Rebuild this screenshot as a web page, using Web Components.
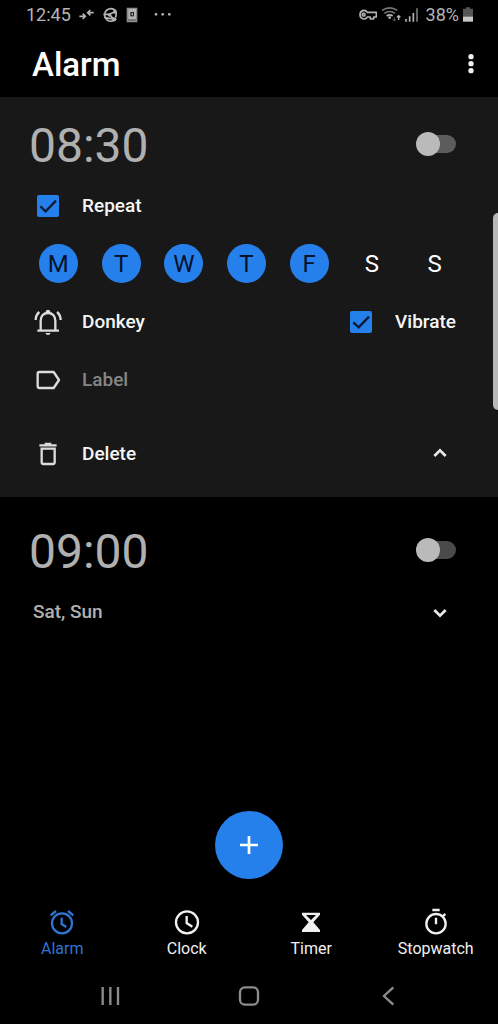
<!DOCTYPE html>
<html lang="en">
<head>
<meta charset="utf-8">
<meta name="viewport" content="width=device-width, initial-scale=1">
<title>Alarm</title>
<style>
  html { background: #000; }
  body { margin: 0; background: #000; color: #f5f5f5; font-family: Roboto, "Noto Sans", sans-serif; }
</style>
</head>
<body>
<alarm-app></alarm-app>
<script>
const define = (name, css, html, setup) => {
  const template = document.createElement('template');
  template.innerHTML = `<style>
    *, *::before, *::after { box-sizing: border-box; }
    svg { display: block; flex: none; }
    button { appearance: none; display: block; border: 0; margin: 0; padding: 0; background: none; color: inherit; font: inherit; cursor: pointer; }
    ${css}</style>${html}`;
  customElements.define(name, class extends HTMLElement {
    constructor() {
      super();
      this.attachShadow({ mode: 'open' }).append(template.content.cloneNode(true));
    }
    connectedCallback() { if (setup) setup(this, this.shadowRoot); }
  });
};

/* Status bar: clock and notifications left, radios and battery right */
define('status-bar', `
  :host { display: flex; align-items: center; height: 30px; padding: 0 25px 0 26px; color: #b4b4b4; font-size: 18px; line-height: 24px; }
  svg { fill: none; stroke: currentColor; }
  .left { display: flex; align-items: center; gap: 8px; flex: 1; }
  .right { display: flex; align-items: center; gap: 4px; }
  .right span { margin-left: 3px; }
  .more { margin-left: 8px; }
`, `
  <div class="left">
    <span>12:45</span>
    <svg width="15" height="18" viewBox="241 18 45 54" stroke-width="5"><path d="M242 49h17M252 41l8 8-8 8M285 38h-17M275 30l-8 8 8 8"/></svg>
    <svg width="16" height="18" viewBox="308 18 48 54" stroke-width="5"><path d="M348 31a19 19 0 1 0 2 25M312 43h18l13 14M330 43l17-8M314 52c8 4 17 2 29 5"/><g fill="currentColor" stroke="none"><circle cx="331" cy="45" r="5"/><circle cx="347" cy="35" r="6"/><circle cx="345" cy="58" r="6"/></g><path d="M351 38l-2 15"/></svg>
    <svg width="12" height="18" viewBox="384 18 36 54" stroke-width="4"><path d="M388 25h28v40h-28z" fill="#777" stroke="#8c8c8c"/><path d="M393 29h19v26h-19z" fill="currentColor"/><path d="M397 36h11v13h-11z" fill="#222" stroke="none"/><path d="M399 42l6-4v9z" fill="currentColor" stroke="none"/></svg>
    <svg class="more" width="18" height="18" viewBox="464 18 54 54"><g fill="currentColor" stroke="none"><circle cx="470" cy="43" r="4"/><circle cx="490" cy="43" r="4"/><circle cx="510" cy="43" r="4"/></g></svg>
  </div>
  <div class="right">
    <svg width="18" height="18" viewBox="57 18 54 54" stroke-width="5"><path d="M82 37c-7-11-22-5-22 7s15 18 22 7h9v6h10v-6h8V37z" stroke-linejoin="round"/><circle cx="71" cy="44" r="4"/></svg>
    <svg width="20" height="18" viewBox="127 18 60 54" stroke-width="5"><path d="M130 31q23-15 46 0M137 40q16-11 32 0" stroke="#777"/><path d="M144 48q9-7 18 0"/><circle cx="153" cy="53" r="4" fill="currentColor" stroke="none"/><path d="M167 52v10M162 58l5 5 5-5" stroke="#666" stroke-width="3"/><path d="M180 60V47M175 52l5-5 5 5" stroke-width="4"/></svg>
    <svg width="14" height="18" viewBox="197 18 42 54" stroke-width="5"><path d="M200 65v-8M211 65V49M222 65V39"/><path d="M233 65V25" stroke="#777"/></svg>
    <span>38%</span>
    <svg width="10" height="18" viewBox="369 18 30 54"><g stroke="none"><path d="M378 22h12v4h9v25h-30V26h9z" fill="#555"/><path d="M369 50h30v15h-30z" fill="#c8c8c8"/></g></svg>
  </div>
`);

define('app-header', `
  :host { display: flex; align-items: center; justify-content: space-between; height: 67px; padding: 0 11px 0 32px; }
  h1 { margin: 0; padding-top: 3px; font-size: 33px; line-height: 40px; font-weight: 500; color: #fff; }
  svg { fill: #f0f0f0; }
`, `
  <h1><slot></slot></h1>
  <button aria-label="More options"><svg width="32" height="32" viewBox="0 0 96 96"><circle cx="48" cy="26" r="8"/><circle cx="48" cy="47" r="8"/><circle cx="48" cy="68" r="8"/></svg></button>
`);

define('toggle-switch', `
  :host { display: block; }
  .track { display: grid; align-items: center; width: 40px; height: 24px; }
  .track::before { content: ""; grid-area: 1 / 1; height: 18px; margin-left: 4px; border-radius: 9px; background: var(--track, #5c5c5c); }
  input { appearance: none; grid-area: 1 / 1; display: flex; width: 40px; height: 24px; margin: 0; cursor: pointer; }
  input::before { content: ""; width: 24px; height: 24px; border-radius: 50%; background: #bababa; }
  input:checked { justify-content: flex-end; }
  input:checked::before { background: #2680eb; }
`, `<div class="track"><input type="checkbox" role="switch"></div>`,
(host, root) => root.querySelector('input').setAttribute('aria-label', host.getAttribute('label')));

define('check-option', `
  :host { display: block; }
  label { display: flex; align-items: center; gap: 18px; cursor: pointer; }
  .box { display: grid; place-items: center; width: 32px; height: 32px; }
  input { appearance: none; grid-area: 1 / 1; width: 22px; height: 22px; margin: 0; border: 2px solid #bbb; border-radius: 2px; }
  input:checked { background: #2680eb; border-color: #2680eb; }
  svg { grid-area: 1 / 1; pointer-events: none; fill: none; stroke: #0b1b38; stroke-width: 7; visibility: hidden; }
  input:checked + svg { visibility: visible; }
`, `
  <label><span class="box"><input type="checkbox" checked><svg width="22" height="22" viewBox="0 0 66 66"><path d="M10 34l16 15L57 17"/></svg></span><slot></slot></label>
`);

define('icon-action', `
  :host { display: block; }
  button { display: flex; align-items: center; gap: 18px; }
  ::slotted(svg) { display: block; fill: none; stroke: #dcdcdc; }
`, `<button><slot name="icon"></slot><slot></slot></button>`);

define('day-picker', `
  :host { display: grid; grid-template-columns: repeat(7, 1fr); place-items: center; box-sizing: border-box; height: 58px; padding: 0 32px 2px 27px; font-weight: 400; }
  button { display: grid; place-items: center; width: 39px; height: 39px; border-radius: 50%; font-size: 24px; line-height: 40px; color: #fff; }
  button[aria-pressed="true"] { background: #2680eb; color: #06122b; }
`, `
  <button aria-label="Monday" aria-pressed="true">M</button>
  <button aria-label="Tuesday" aria-pressed="true">T</button>
  <button aria-label="Wednesday" aria-pressed="true">W</button>
  <button aria-label="Thursday" aria-pressed="true">T</button>
  <button aria-label="Friday" aria-pressed="true">F</button>
  <button aria-label="Saturday" aria-pressed="false">S</button>
  <button aria-label="Sunday" aria-pressed="false">S</button>
`, (host, root) => root.querySelectorAll('button').forEach(b => b.onclick = () =>
  b.setAttribute('aria-pressed', b.getAttribute('aria-pressed') !== 'true')));

/* One alarm: time and switch on top, slotted detail rows below */
define('alarm-card', `
  :host { display: block; padding: 22px 0 14px; font-size: 19px; line-height: 24px; font-weight: 500; --track: #4a4a4a; }
  :host([open]) { padding-top: 16px; background: #181818; --track: #5c5c5c; }
  .top { display: flex; align-items: center; justify-content: space-between; height: 64px; padding: 0 42px 2px 29px; }
  .time { padding-top: 4px; font-size: 48px; line-height: 56px; font-weight: 400; color: #b0b0b0; }
`, `
  <div class="top"><button class="time"><slot name="time"></slot></button><toggle-switch label="Alarm on"></toggle-switch></div>
  <slot></slot>
`);

define('card-row', `
  :host { display: flex; align-items: center; justify-content: space-between; height: 58px; padding: 0 42px 0 32px; }
`, `<slot></slot>`);

define('expand-button', `
  :host { display: block; }
  svg { fill: none; stroke: #e8e8e8; stroke-width: 8; }
  :host([down]) svg { transform: rotate(180deg); }
`, `<button aria-label="Show or hide details"><svg width="32" height="32" viewBox="0 0 96 96"><path d="M31 54l17-17 17 17"/></svg></button>`);

define('add-button', `
  :host { display: block; }
  button { display: grid; place-items: center; width: 68px; height: 68px; border-radius: 50%; background: #2680eb; }
  svg { fill: none; stroke: #fff; stroke-width: 8; }
`, `<button aria-label="Add alarm"><svg width="18" height="18" viewBox="0 0 54 54"><path d="M27 0v54M0 27h54"/></svg></button>`);

define('tab-link', `
  :host { display: block; flex: 1 1 0; min-width: 0; }
  a { display: flex; flex-direction: column; align-items: center; gap: 3px; padding: 12px 0 9px; color: #f0f0f0; font-size: 16px; line-height: 20px; text-decoration: none; }
  :host([current]) a { color: #2e74d0; }
  ::slotted(svg) { display: block; fill: none; stroke: currentColor; }
`, `<a><slot name="icon"></slot><slot></slot></a>`,
(host, root) => {
  const a = root.querySelector('a');
  a.href = host.getAttribute('to');
  if (host.hasAttribute('current')) a.setAttribute('aria-current', 'page');
});

define('tab-bar', `
  :host { display: block; }
  nav { display: flex; }
`, `<nav aria-label="Sections"><slot></slot></nav>`);

define('system-nav', `
  :host { display: grid; grid-template-columns: repeat(3, 1fr); place-items: center; height: 56px; padding: 0 40px; }
  svg { fill: none; stroke: #8c8c8c; stroke-width: 7; }
`, `
  <button aria-label="Recent apps"><svg width="24" height="24" viewBox="0 0 72 72"><path d="M14 9v54M37 9v54M60 9v54"/></svg></button>
  <button aria-label="Home"><svg width="24" height="24" viewBox="0 0 72 72"><rect x="9" y="10" width="54" height="52" rx="15"/></svg></button>
  <button aria-label="Back"><svg width="24" height="24" viewBox="0 0 72 72"><path d="M52 10L24 36l28 26"/></svg></button>
`);

define('alarm-app', `
  :host { display: flex; flex-direction: column; min-height: 100vh; }
  main { position: relative; flex: 1; display: flex; flex-direction: column; }
  .scroll { position: absolute; right: 0; top: 116px; width: 5px; height: 197px; border-radius: 5px 0 0 5px; background: #b8b8b8; }
  .hint { color: #868686; }
  .summary { color: #b0b0b0; padding-left: 1px; }
  .gap { margin-top: 16px; }
  add-button { align-self: center; margin: auto 0 17px; }
`, `
  <status-bar></status-bar>
  <app-header>Alarm</app-header>
  <main>
    <alarm-card open>
      <span slot="time">08:30</span>
      <card-row><check-option>Repeat</check-option></card-row>
      <day-picker></day-picker>
      <card-row>
        <icon-action><svg slot="icon" width="32" height="32" viewBox="97 45 96 96" stroke-width="7"><path d="M113 119h65M123 118V90c0-15 9-24 22-24s22 9 22 24v28M108 87c0-10 4-18 11-24M183 87c0-10-4-18-11-24"/><path d="M137 126h16q-2 6-8 6t-8-6zM138 65v-3q1-6 7-6t7 6v3z" fill="#dcdcdc" stroke="none"/></svg>Donkey</icon-action>
        <check-option>Vibrate</check-option>
      </card-row>
      <card-row>
        <icon-action class="hint"><svg slot="icon" width="32" height="32" viewBox="97 219 96 96" stroke-width="7"><path d="M119 243h43l16 24-16 24h-43q-5 0-5-5v-38q0-5 5-5z" stroke-linejoin="round"/></svg>Label</icon-action>
      </card-row>
      <card-row class="gap">
        <icon-action><svg slot="icon" width="32" height="32" viewBox="97 441 96 96" stroke-width="7"><path d="M119 463h52M135 459h20M126 473h39v41q0 5-5 5h-29q-5 0-5-5z"/></svg>Delete</icon-action>
        <expand-button></expand-button>
      </card-row>
    </alarm-card>
    <alarm-card>
      <span slot="time">09:00</span>
      <card-row><span class="summary">Sat, Sun</span><expand-button down></expand-button></card-row>
    </alarm-card>
    <add-button></add-button>
    <div class="scroll"></div>
  </main>
  <tab-bar>
    <tab-link to="#alarm" current><svg slot="icon" width="28" height="28" viewBox="145 54 84 84" stroke-width="7"><circle cx="187" cy="100" r="30"/><path d="M186 83v19l14 9M153 76l16-13M221 76l-16-13"/></svg>Alarm</tab-link>
    <tab-link to="#clock"><svg slot="icon" width="28" height="28" viewBox="518 54 84 84" stroke-width="7"><circle cx="560" cy="97" r="33"/><path d="M559 78v21l17 11"/></svg>Clock</tab-link>
    <tab-link to="#timer"><svg slot="icon" width="28" height="28" viewBox="142 54 84 84"><path fill="currentColor" stroke="none" fill-rule="evenodd" d="M157 68h54v6l-20 23 20 23v6h-54v-6l20-23-20-23zM169 75l15 15 15-15z"/></svg>Timer</tab-link>
    <tab-link to="#stopwatch"><svg slot="icon" width="28" height="28" viewBox="515 54 84 84" stroke-width="7"><circle cx="557" cy="101" r="29"/><path d="M546 60h22M557 83v20M577 79l8-7"/></svg>Stopwatch</tab-link>
  </tab-bar>
  <system-nav></system-nav>
`);
</script>
</body>
</html>
